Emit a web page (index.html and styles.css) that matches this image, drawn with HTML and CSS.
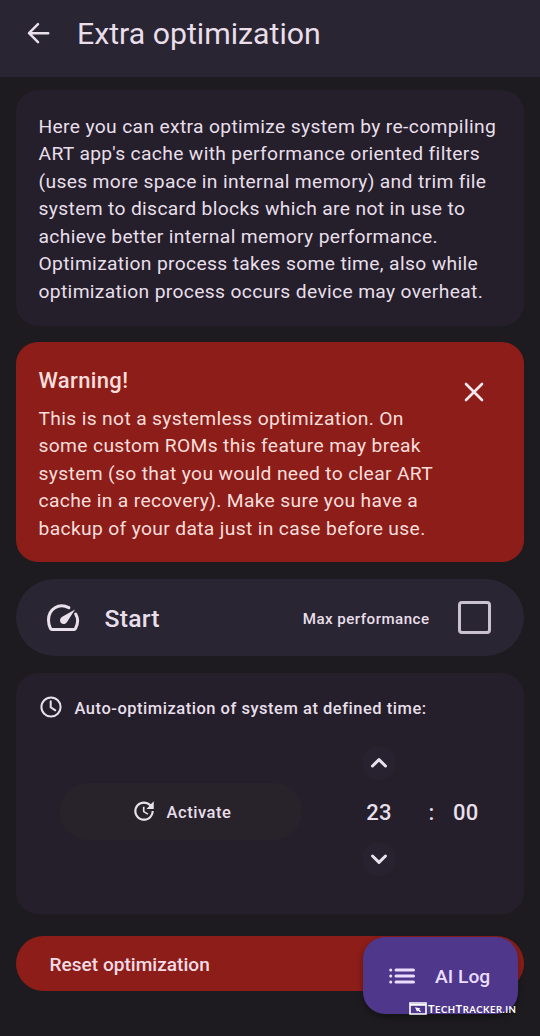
FILE: index.html
```html
<!DOCTYPE html>
<html lang="en">
<head>
<meta charset="utf-8">
<title>Extra optimization</title>
<link rel="stylesheet" href="styles.css">
</head>
<body>
<div class="screen">
  <header class="app-bar">
    <svg class="back" viewBox="0 0 24 24" width="24" height="24"><path d="M21.200 11.200H2.500M11 2.200 2 11.200l9 9"/></svg>
    <h1 class="title">Extra optimization</h1>
  </header>
  <main class="content">
    <section class="card intro">
      <p class="body-text">Here you can extra optimize system by re-compiling<br>ART app's cache with performance oriented filters<br>(uses more space in internal memory) and trim file<br>system to discard blocks which are not in use to<br>achieve better internal memory performance.<br>Optimization process takes some time, also while<br>optimization process occurs device may overheat.</p>
    </section>
    <section class="card warning">
      <div>
        <h2 class="warning-title">Warning!</h2>
        <p class="body-text">This is not a systemless optimization. On<br>some custom ROMs this feature may break<br>system (so that you would need to clear ART<br>cache in a recovery). Make sure you have a<br>backup of your data just in case before use.</p>
      </div>
      <svg class="close" viewBox="0 0 20 20" width="20" height="20"><path d="m2 2 16 16M18 2 2 18"/></svg>
    </section>
    <section class="start">
      <svg class="gauge" viewBox="0 0 34 28" width="34" height="28">
        <path class="gauge-arc" d="M22.800 3.700C13-1.500 2.500 5 2.500 16c0 3.200.7 6 2 8.500.3.600.8 1 1.500 1h22c.7 0 1.200-.4 1.500-1 2.700-5 2.600-10.400.2-14.500"/>
        <path class="gauge-needle" d="M29 5.500 20.900 18.200c-1.400 2.100-4.200 2.300-5.900.8-1.600-1.700-1.200-4.500.8-5.900z"/>
      </svg>
      <span class="start-label">Start</span>
      <span class="max-label">Max performance</span>
      <span class="checkbox"></span>
    </section>
    <section class="card schedule">
      <div class="schedule-head">
        <svg class="clock" viewBox="0 0 22 22" width="22" height="22"><circle cx="11" cy="11" r="9.600"/><path d="M10.700 5.300v6l4.600 3"/></svg>
        <span class="schedule-title">Auto-optimization of system at defined time:</span>
      </div>
      <div class="schedule-row">
        <div class="activate">
          <svg class="update" viewBox="0 0 24 24" width="26" height="26"><path d="M21 10.120h-6.780l2.740-2.820c-2.730-2.700-7.150-2.800-9.880-.1-2.730 2.710-2.730 7.080 0 9.790s7.150 2.710 9.880 0C18.320 15.650 19 14.080 19 12.100h2c0 1.980-.88 4.550-2.640 6.290-3.510 3.480-9.210 3.480-12.720 0-3.500-3.470-3.530-9.110-.02-12.580s9.140-3.470 12.650 0L21 3v7.120zM12.500 8v4.250l3.500 2.080-.72 1.210L11 13V8h1.500z"/></svg>
          <span>Activate</span>
        </div>
        <div class="hours">
          <span class="step"><svg viewBox="0 0 18 12" width="18" height="12"><path d="m2.500 9 6.500-6.300L15.500 9"/></svg></span>
          <span class="digits">23</span>
          <span class="step"><svg viewBox="0 0 18 12" width="18" height="12"><path d="M2.500 3 9 9.300 15.500 3"/></svg></span>
        </div>
        <span class="digits colon">:</span>
        <span class="digits">00</span>
      </div>
    </section>
    <div class="reset">Reset optimization</div>
  </main>
  <div class="fab">
    <svg class="list" viewBox="0 0 26 16" width="26" height="16"><path d="M7 2h17.500M7 8h17.500M7 14h17.500M1.700 2h.1M1.700 8h.1M1.700 14h.1"/></svg>
    <span>AI Log</span>
  </div>
  <div class="watermark">
    <svg viewBox="0 0 18 13" width="18" height="13"><path class="frame" d="M1 1h16v11H1zM1 2.900h16"/><path class="cursor" d="m6 5.300 5.500 1.300-1.400.9 1.900 1.700-1 1-2-1.600-.9 1.200z"/></svg>
    <span class="brand">T<small>ECH</small>T<small>RACKER.IN</small></span>
  </div>
</div>
</body>
</html>
```
FILE: styles.css
```css
* { box-sizing: border-box; }
body { margin: 0; background: #1d1b1f; }
h1, h2, p { margin: 0; }
svg { display: block; flex: none; fill: none; stroke: #e9e0ec; }

.screen {
  position: relative;
  width: 540px;
  height: 1036px;
  overflow: hidden;
  background: #1d1b1f;
  color: #e8dfeb;
  font-family: Roboto, sans-serif;
  white-space: nowrap;
}

.app-bar {
  display: flex;
  align-items: center;
  height: 77px;
  padding: 0 27px 9px;
  background: #2a2532;
}
.back { stroke-width: 2.5; stroke-linecap: round; stroke-linejoin: round; }
.title { margin-left: 26px; font-size: 30.25px; line-height: 38px; font-weight: 400; }

.content { display: flex; flex-direction: column; padding: 13px 16px 0; }
.card { border-radius: 22px; background: #241f2a; }
.body-text { font-size: 19.25px; line-height: 27.5px; letter-spacing: .34px; }

.intro { height: 236px; padding: 22.500px 22.500px; }

.warning {
  display: flex;
  justify-content: space-between;
  height: 220px;
  margin-top: 16px;
  padding: 22px 40px 0 22.500px;
  background: #8c1d18;
  color: #f9dedc;
}
.warning-title { margin-bottom: 7.500px; font-size: 22px; line-height: 33px; font-weight: 500; letter-spacing: .35px; }
.close { margin-top: 17.500px; stroke: #f9e6ee; stroke-width: 2.6; stroke-linecap: round; }

.start {
  display: flex;
  align-items: center;
  height: 77px;
  margin-top: 17px;
  padding: 0 33.500px 0 30px;
  border-radius: 39px;
  background: #2a2532;
  font-weight: 500;
}
.gauge-arc { stroke-width: 3; stroke-linecap: round; }
.gauge-needle { fill: #e9e0ec; stroke: none; }
.start-label { margin-left: 24.500px; padding-top: 2px; font-size: 24.75px; line-height: 32px; letter-spacing: .2px; }
.max-label { margin-left: auto; padding-top: 2px; font-size: 15.125px; letter-spacing: .47px; }
.checkbox { width: 33px; height: 33px; margin-left: 28px; border: 3px solid #cac1d0; border-radius: 4px; }

.schedule { height: 241px; margin-top: 17px; padding: 23px 22px 0 24px; font-weight: 500; }
.schedule-head { display: flex; align-items: center; height: 22px; }
.clock { stroke-width: 2; stroke-linecap: round; }
.schedule-title { margin-left: 12.500px; padding-top: 2px; font-size: 16.5px; letter-spacing: .52px; }
.schedule-row { display: flex; align-items: center; height: 130px; margin-top: 28px; padding-left: 20px; }
.activate {
  display: flex;
  align-items: center;
  justify-content: center;
  gap: 10px;
  width: 242px;
  height: 57px;
  border-radius: 29px;
  background: #28232b;
  font-size: 16.5px;
  letter-spacing: .55px;
}
.activate span { padding-top: 2px; }
.update { fill: #e9e0ec; stroke: none; }
.hours { display: flex; flex-direction: column; align-items: center; justify-content: space-between; width: 34px; height: 130px; margin-left: 60px; }
.step { display: grid; place-items: center; width: 34px; height: 34px; border-radius: 50%; background: #282230; }
.step svg { stroke-width: 3; stroke-linecap: round; stroke-linejoin: round; }
.digits { padding-top: 4px; font-size: 22px; line-height: 30px; letter-spacing: .2px; }
.colon { margin: 0 18.500px 0 32.500px; }

.reset {
  height: 55px;
  margin-top: 22px;
  padding-left: 33.500px;
  border-radius: 28px;
  background: #8c1d18;
  color: #f3dce6;
  font-size: 19.1px;
  line-height: 58px;
  font-weight: 500;
}

.fab {
  position: absolute;
  left: 363px;
  top: 937px;
  display: flex;
  align-items: center;
  width: 155px;
  height: 77px;
  padding-left: 26px;
  border-radius: 22px;
  background: #4f378b;
  box-shadow: 0 3px 6px #0005;
  color: #eaddff;
  font-size: 19.25px;
  font-weight: 500;
}
.fab span { padding-top: 2px; }
.list { margin-right: 20px; stroke: #eaddff; stroke-width: 3; stroke-linecap: round; }

.watermark { position: absolute; left: 409px; top: 1001px; display: flex; align-items: center; height: 14px; color: #fff; }
.watermark svg { stroke: #fff; }
.frame { stroke-width: 1.6; }
.cursor { fill: #fff; stroke: none; }
.brand { margin-left: 1px; padding-top: 2px; font: 700 11px/14px Lato, sans-serif; letter-spacing: .5px; }
.brand small { font-size: 9.5px; }
```
